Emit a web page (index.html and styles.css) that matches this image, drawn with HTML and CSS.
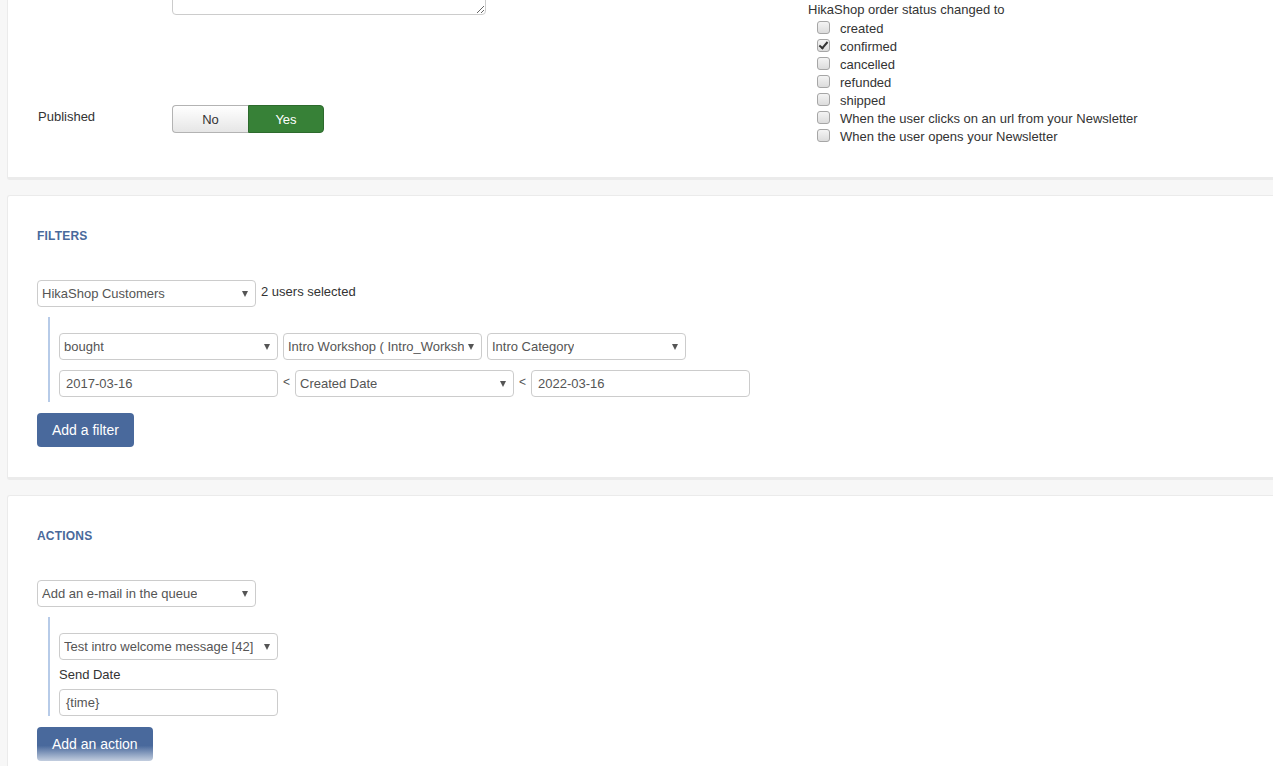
FILE: index.html
```html
<!DOCTYPE html>
<html>
<head>
<meta charset="utf-8">
<link rel="stylesheet" href="styles.css">
</head>
<body>
<div class="page">
  <section class="card card-top">
    <div class="col-left">
      <div class="row">
        <div class="label"></div>
        <textarea class="textarea"></textarea>
      </div>
      <div class="row row-published">
        <div class="label label-pub">Published</div>
        <div class="toggle">
          <span class="tg tg-no">No</span>
          <span class="tg tg-yes">Yes</span>
        </div>
      </div>
    </div>
    <div class="col-right">
      <div class="status-title">HikaShop order status changed to</div>
      <ul class="checks">
        <li><input type="checkbox"><span>created</span></li>
        <li><input type="checkbox" checked><span>confirmed</span></li>
        <li><input type="checkbox"><span>cancelled</span></li>
        <li><input type="checkbox"><span>refunded</span></li>
        <li><input type="checkbox"><span>shipped</span></li>
        <li><input type="checkbox"><span>When the user clicks on an url from your Newsletter</span></li>
        <li><input type="checkbox"><span>When the user opens your Newsletter</span></li>
      </ul>
    </div>
  </section>

  <section class="card">
    <h3 class="card-title">Filters</h3>
    <div class="line">
      <div class="select w219"><span class="sel-text">HikaShop Customers</span><span class="caret"></span></div>
      <span class="note">2 users selected</span>
    </div>
    <div class="group group-filter">
      <div class="line gap5">
        <div class="select w219"><span class="sel-text">bought</span><span class="caret"></span></div>
        <div class="select w199"><span class="sel-text">Intro Workshop ( Intro_Worksh</span><span class="caret"></span></div>
        <div class="select w199"><span class="sel-text">Intro Category</span><span class="caret"></span></div>
      </div>
      <div class="line line-dates">
        <div class="input w219">2017-03-16</div>
        <span class="lt">&lt;</span>
        <div class="select w219"><span class="sel-text">Created Date</span><span class="caret"></span></div>
        <span class="lt">&lt;</span>
        <div class="input w219">2022-03-16</div>
      </div>
    </div>
    <button class="btn">Add a filter</button>
  </section>

  <section class="card">
    <h3 class="card-title">Actions</h3>
    <div class="line">
      <div class="select w219"><span class="sel-text">Add an e-mail in the queue</span><span class="caret"></span></div>
    </div>
    <div class="group group-action">
      <div class="select w219"><span class="sel-text">Test intro welcome message [42]</span><span class="caret"></span></div>
      <div class="field-label">Send Date</div>
      <div class="input w219">{time}</div>
    </div>
    <button class="btn btn-fade">Add an action</button>
  </section>
</div>
</body>
</html>
```

FILE: styles.css
```css
html, body {
  margin: 0;
  padding: 0;
}
body {
  background: #f7f7f7;
  font-family: "Liberation Sans", Arial, sans-serif;
  font-size: 13px;
  color: #333;
  overflow: hidden;
  height: 766px;
}
.page {
  padding-left: 7px;
  width: 1300px;
}
.card {
  background: #fff;
  border: 1px solid #ebebeb;
  border-bottom: 3px solid #ebebeb;
  border-radius: 3px;
  padding: 30px 0 30px 29px;
  margin-bottom: 15px;
}
.card-top {
  margin-top: -99px;
  padding: 19px 0 32px 30px;
  display: flex;
  align-items: flex-start;
}
.col-left {
  width: 770px;
}
.row {
  display: flex;
  align-items: center;
}
.label {
  width: 134px;
  flex: none;
  color: #333;
}
.label-pub {
  position: relative;
  top: -3px;
}
.textarea {
  width: 314px;
  height: 94px;
  box-sizing: border-box;
  border: 1px solid #ccc;
  border-radius: 4px;
  margin: 0;
  padding: 4px;
  resize: both;
  font-family: inherit;
  display: block;
}
.row-published {
  margin-top: 90px;
}
.toggle {
  display: flex;
  height: 28px;
}
.tg {
  width: 76px;
  box-sizing: border-box;
  display: flex;
  align-items: center;
  justify-content: center;
  font-size: 13px;
}
.tg-no {
  background: linear-gradient(#ffffff, #e6e6e6);
  border: 1px solid #b3b3b3;
  border-right: none;
  border-radius: 4px 0 0 4px;
  color: #333;
}
.tg-yes {
  background: #378137;
  border: 1px solid #2d6a2d;
  border-radius: 0 4px 4px 0;
  color: #fff;
}
.col-right {
  padding-top: 80px;
}
.status-title {
  line-height: 18px;
}
.checks {
  list-style: none;
  margin: 0;
  padding: 0 0 0 9px;
}
.checks li {
  display: flex;
  align-items: center;
  height: 18px;
}
.checks input {
  -webkit-appearance: none;
  appearance: none;
  width: 13px;
  height: 13px;
  box-sizing: border-box;
  margin: 0 10px 0 0;
  border: 1px solid #a6a6a6;
  border-radius: 3px;
  background: linear-gradient(#f4f4f4, #dcdcdc);
  position: relative;
  top: -1px;
  flex: none;
}
.checks input:checked::after {
  content: "";
  position: absolute;
  left: 3px;
  top: 0px;
  width: 3px;
  height: 7px;
  border-right: 2px solid #333;
  border-bottom: 2px solid #333;
  transform: rotate(40deg);
}
.card-title {
  margin: 1px 0 0;
  font-size: 12px;
  font-weight: bold;
  text-transform: uppercase;
  color: #49699b;
  line-height: 18px;
  letter-spacing: 0.2px;
}
.line {
  display: flex;
  align-items: center;
  margin-top: 35px;
}
.group .line {
  margin-top: 0;
}
.gap5 {
  gap: 5px;
}
.group .line-dates {
  margin-top: 10px;
}
.select, .input {
  height: 27px;
  box-sizing: border-box;
  border: 1px solid #ccc;
  border-radius: 4px;
  background: #fff;
  color: #555;
  display: flex;
  align-items: center;
  font-size: 13px;
  white-space: nowrap;
  overflow: hidden;
}
.select {
  padding: 0 7px 0 4px;
  justify-content: space-between;
}
.input {
  padding: 0 6px;
}
.w219 { width: 219px; flex: none; }
.w199 { width: 199px; flex: none; }
.sel-text {
  overflow: hidden;
}
.caret {
  flex: none;
  width: 0;
  height: 0;
  border-left: 3.5px solid transparent;
  border-right: 3.5px solid transparent;
  border-top: 6px solid #555;
  margin-left: 4px;
}
.note {
  margin-left: 5px;
  color: #333;
  position: relative;
  top: -2px;
}
.lt {
  width: 17px;
  text-align: center;
  color: #555;
  font-size: 12px;
  position: relative;
  top: -2px;
}
.group {
  margin: 10px 0 0 11px;
  border-left: 2px solid #b7cbe8;
  padding-left: 9px;
}
.group-filter {
  padding-top: 16px;
  padding-bottom: 5px;
}
.group-action {
  padding-top: 16px;
}
.field-label {
  line-height: 18px;
  margin: 6px 0 5px;
  color: #333;
}
.btn {
  display: block;
  margin-top: 11px;
  height: 34px;
  padding: 0 15px;
  border: none;
  border-radius: 4px;
  background: #49699c;
  color: #fff;
  font-family: "Liberation Sans", Arial, sans-serif;
  font-size: 14px;
}
.btn-fade {
  background: linear-gradient(#49699c 0%, #49699c 55%, #c3cedf 100%);
}
```
